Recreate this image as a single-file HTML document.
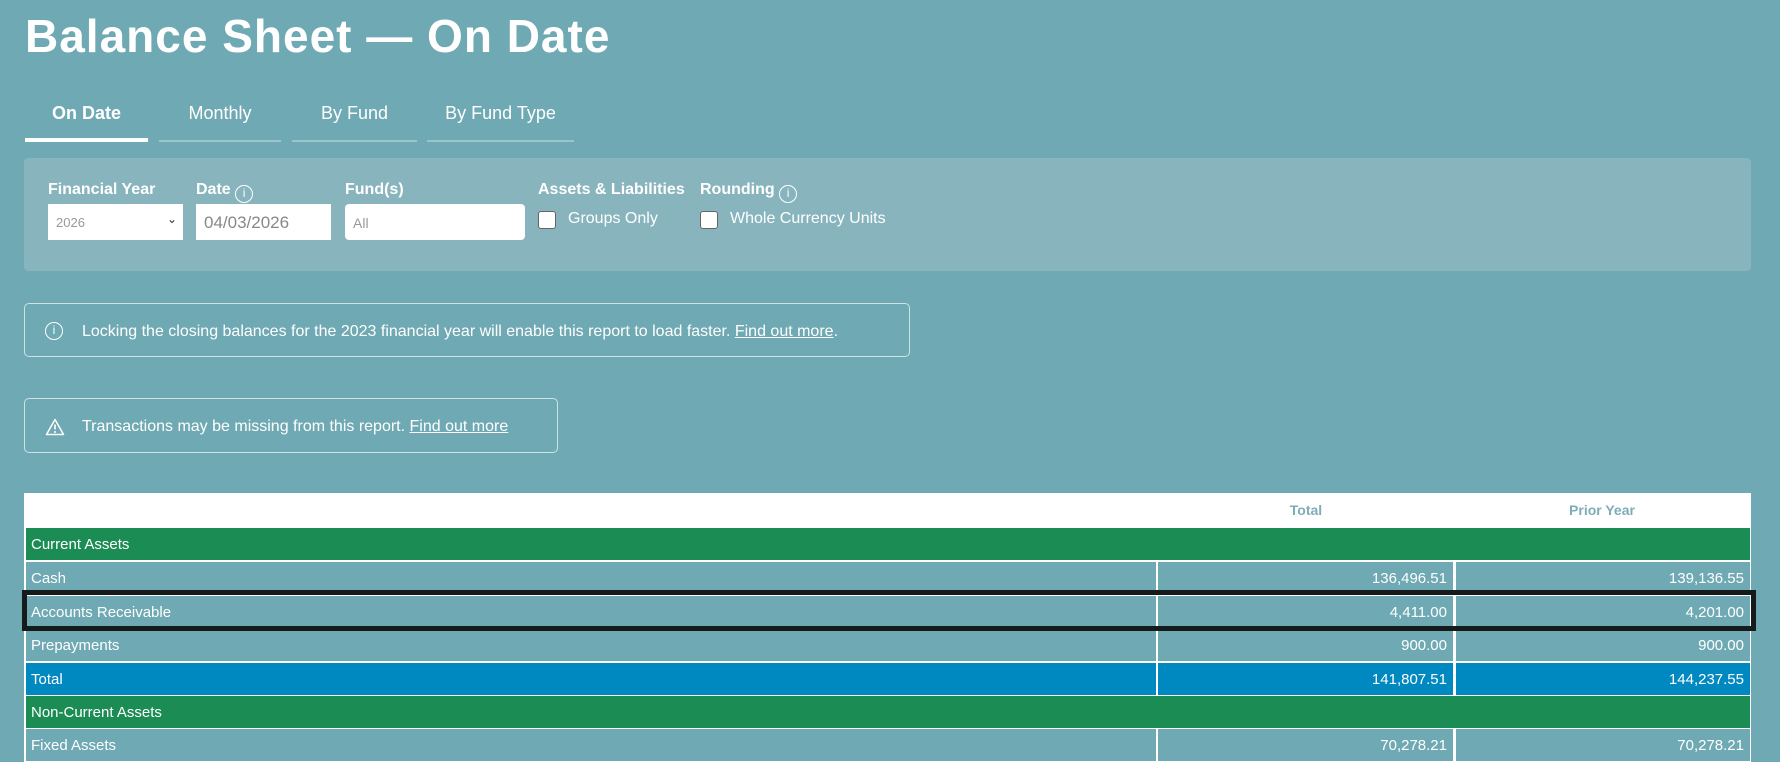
<!DOCTYPE html>
<html><head><meta charset="utf-8"><style>
*{box-sizing:border-box;margin:0;padding:0}
body{width:1780px;height:762px;overflow:hidden;background:#6fa9b3;font-family:"Liberation Sans",sans-serif;color:#fff;position:relative}
.a{position:absolute}
h1{position:absolute;left:25px;top:9px;font-size:46px;font-weight:bold;letter-spacing:1px}
.tab{position:absolute;top:103px;height:39px;font-size:18px;text-align:center;border-bottom:2px solid #9cc4cb}
.tab.on{border-bottom:4px solid #fff;font-weight:bold}
.panel{left:24px;top:158px;width:1727px;height:113px;background:#88b5bd;border-radius:4px}
.lbl{font-size:16px;font-weight:bold;top:181px}
.inp{top:204px;height:36px;background:#fff;color:#999;font-size:15px;padding:9px 8px}
.cb{top:211px;width:18px;height:18px;background:#fff;border:1px solid #666;border-radius:3px}
.cbl{top:210px;font-size:16px}
.box{border:1px solid #cfe3e6;border-radius:5px;font-size:16px}
.box u{text-decoration:underline}
.ic{display:inline-block;width:18px;height:18px;border:1.5px solid #fff;border-radius:50%;font-size:12px;text-align:center;line-height:15px;font-weight:normal;vertical-align:-3px}
.row{position:absolute;left:26px;width:1724px;height:32px;font-size:15px}
.row div{position:absolute;top:0;height:32px;line-height:33px}
.c1{left:0;width:1130px;padding-left:5px}
.c2{left:1132px;width:295px;text-align:right;padding-right:6px}
.c3{left:1430px;width:294px;text-align:right;padding-right:6px}
.g{background:#1a8c54}
.b div{background:#0088c0}
.n div{background:#6fa9b3}
</style></head><body>
<h1>Balance Sheet — On Date</h1>
<div class="tab on" style="left:25px;width:123px">On Date</div>
<div class="tab" style="left:159px;width:122px">Monthly</div>
<div class="tab" style="left:292px;width:125px">By Fund</div>
<div class="tab" style="left:427px;width:147px">By Fund Type</div>
<div class="a panel"></div>
<div class="a lbl" style="left:48px">Financial Year</div>
<div class="a lbl" style="left:196px">Date <span class="ic">i</span></div>
<div class="a lbl" style="left:345px">Fund(s)</div>
<div class="a lbl" style="left:538px">Assets &amp; Liabilities</div>
<div class="a lbl" style="left:700px">Rounding <span class="ic">i</span></div>
<div class="a inp" style="left:48px;width:135px;font-size:13px;padding-top:11px">2026<span style="position:absolute;right:6px;top:8px;color:#333;font-size:12px">&#8964;</span></div>
<div class="a inp" style="left:196px;width:135px;color:#888;font-size:17px;padding-top:9px">04/03/2026</div>
<div class="a inp" style="left:345px;width:180px;border-radius:4px;font-size:14px;padding-top:11px">All</div>
<div class="a cb" style="left:538px"></div><div class="a cbl" style="left:568px">Groups Only</div>
<div class="a cb" style="left:700px"></div><div class="a cbl" style="left:730px">Whole Currency Units</div>
<div class="a box" style="left:24px;top:303px;width:886px;height:54px"><span class="ic a" style="left:20px;top:18px">i</span><span class="a" style="left:57px;top:19px">Locking the closing balances for the 2023 financial year will enable this report to load faster. <u>Find out more</u>.</span></div>
<div class="a box" style="left:24px;top:398px;width:534px;height:55px"><svg class="a" style="left:20px;top:19px" width="20" height="18" viewBox="0 0 20 18"><path d="M10 1.5 L18.5 16.5 H1.5 Z" fill="none" stroke="#fff" stroke-width="1.5" stroke-linejoin="round"/><path d="M10 6.5v5" stroke="#fff" stroke-width="1.6"/><circle cx="10" cy="14" r="1" fill="#fff"/></svg><span class="a" style="left:57px;top:19px">Transactions may be missing from this report. <u>Find out more</u></span></div>
<div class="a" style="left:24px;top:493px;width:1727px;height:269px;background:#fff"></div>
<div class="a" style="left:1270px;top:502px;width:72px;text-align:center;font-size:14px;font-weight:bold;color:#7eadb7">Total</div>
<div class="a" style="left:1550px;top:502px;width:104px;text-align:center;font-size:14px;font-weight:bold;color:#7eadb7">Prior Year</div>
<div class="row g" style="top:528px"><div class="c1">Current Assets</div></div>
<div class="row n" style="top:562px"><div class="c1">Cash</div><div class="c2">136,496.51</div><div class="c3">139,136.55</div></div>
<div class="row n" style="top:596px"><div class="c1">Accounts Receivable</div><div class="c2">4,411.00</div><div class="c3">4,201.00</div></div>
<div class="row n" style="top:629px"><div class="c1">Prepayments</div><div class="c2">900.00</div><div class="c3">900.00</div></div>
<div class="row b" style="top:663px"><div class="c1">Total</div><div class="c2">141,807.51</div><div class="c3">144,237.55</div></div>
<div class="row g" style="top:696px"><div class="c1">Non-Current Assets</div></div>
<div class="row n" style="top:729px;height:33px"><div class="c1">Fixed Assets</div><div class="c2">70,278.21</div><div class="c3">70,278.21</div></div>
<div class="a" style="left:22px;top:590px;width:1734px;height:41px;border:5px solid #151a1b"></div>
</body></html>
